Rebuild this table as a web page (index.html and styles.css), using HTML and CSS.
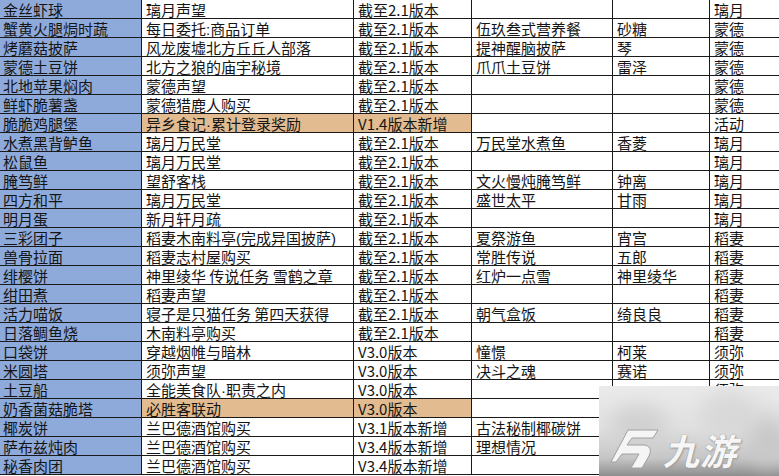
FILE: index.html
```html
<!DOCTYPE html>
<html lang="zh-CN">
<head>
<meta charset="utf-8">
<title>料理表</title>
<link rel="stylesheet" href="styles.css">
</head>
<body>
<div class="sheet">
  <div class="grid">
    <div class="c k">金丝虾球</div><div class="c">璃月声望</div><div class="c">截至2.1版本</div><div class="c"></div><div class="c"></div><div class="c">璃月</div>
    <div class="c k">蟹黄火腿焗时蔬</div><div class="c">每日委托<span class="lat">:</span>商品订单</div><div class="c">截至2.1版本</div><div class="c">伍玖叁式营养餐</div><div class="c">砂糖</div><div class="c">蒙德</div>
    <div class="c k">烤蘑菇披萨</div><div class="c">风龙废墟北方丘丘人部落</div><div class="c">截至2.1版本</div><div class="c">提神醒脑披萨</div><div class="c">琴</div><div class="c">蒙德</div>
    <div class="c k">蒙德土豆饼</div><div class="c">北方之狼的庙宇秘境</div><div class="c">截至2.1版本</div><div class="c">爪爪土豆饼</div><div class="c">雷泽</div><div class="c">蒙德</div>
    <div class="c k">北地苹果焖肉</div><div class="c">蒙德声望</div><div class="c">截至2.1版本</div><div class="c"></div><div class="c"></div><div class="c">蒙德</div>
    <div class="c k">鲜虾脆薯盏</div><div class="c">蒙德猎鹿人购买</div><div class="c">截至2.1版本</div><div class="c"></div><div class="c"></div><div class="c">蒙德</div>
    <div class="c k">脆脆鸡腿堡</div><div class="c hl">异乡食记<span class="lat">·</span>累计登录奖励</div><div class="c hl">V1.4版本新增</div><div class="c"></div><div class="c"></div><div class="c">活动</div>
    <div class="c k">水煮黑背鲈鱼</div><div class="c">璃月万民堂</div><div class="c">截至2.1版本</div><div class="c">万民堂水煮鱼</div><div class="c">香菱</div><div class="c">璃月</div>
    <div class="c k">松鼠鱼</div><div class="c">璃月万民堂</div><div class="c">截至2.1版本</div><div class="c"></div><div class="c"></div><div class="c">璃月</div>
    <div class="c k">腌笃鲜</div><div class="c">望舒客栈</div><div class="c">截至2.1版本</div><div class="c">文火慢炖腌笃鲜</div><div class="c">钟离</div><div class="c">璃月</div>
    <div class="c k">四方和平</div><div class="c">璃月万民堂</div><div class="c">截至2.1版本</div><div class="c">盛世太平</div><div class="c">甘雨</div><div class="c">璃月</div>
    <div class="c k">明月蛋</div><div class="c">新月轩月疏</div><div class="c">截至2.1版本</div><div class="c"></div><div class="c"></div><div class="c">璃月</div>
    <div class="c k">三彩团子</div><div class="c">稻妻木南料亭<span class="lat">(</span>完成异国披萨<span class="lat">)</span></div><div class="c">截至2.1版本</div><div class="c">夏祭游鱼</div><div class="c">宵宫</div><div class="c">稻妻</div>
    <div class="c k">兽骨拉面</div><div class="c">稻妻志村屋购买</div><div class="c">截至2.1版本</div><div class="c">常胜传说</div><div class="c">五郎</div><div class="c">稻妻</div>
    <div class="c k">绯樱饼</div><div class="c">神里绫华 传说任务 雪鹤之章</div><div class="c">截至2.1版本</div><div class="c">红炉一点雪</div><div class="c">神里绫华</div><div class="c">稻妻</div>
    <div class="c k">绀田煮</div><div class="c">稻妻声望</div><div class="c">截至2.1版本</div><div class="c"></div><div class="c"></div><div class="c">稻妻</div>
    <div class="c k">活力喵饭</div><div class="c">寝子是只猫任务 第四天获得</div><div class="c">截至2.1版本</div><div class="c">朝气盒饭</div><div class="c">绮良良</div><div class="c">稻妻</div>
    <div class="c k">日落鲷鱼烧</div><div class="c">木南料亭购买</div><div class="c">截至2.1版本</div><div class="c"></div><div class="c"></div><div class="c">稻妻</div>
    <div class="c k">口袋饼</div><div class="c">穿越烟帷与暗林</div><div class="c">V3.0版本</div><div class="c">憧憬</div><div class="c">柯莱</div><div class="c">须弥</div>
    <div class="c k">米圆塔</div><div class="c">须弥声望</div><div class="c">V3.0版本</div><div class="c">决斗之魂</div><div class="c">赛诺</div><div class="c">须弥</div>
    <div class="c k">土豆船</div><div class="c">全能美食队<span class="lat">·</span>职责之内</div><div class="c">V3.0版本</div><div class="c"></div><div class="c"></div><div class="c">须弥</div>
    <div class="c k">奶香菌菇脆塔</div><div class="c hl">必胜客联动</div><div class="c hl">V3.0版本</div><div class="c"></div><div class="c"></div><div class="c">须弥</div>
    <div class="c k">椰炭饼</div><div class="c">兰巴德酒馆购买</div><div class="c">V3.1版本新增</div><div class="c">古法秘制椰碳饼</div><div class="c"></div><div class="c">须弥</div>
    <div class="c k">萨布兹炖肉</div><div class="c">兰巴德酒馆购买</div><div class="c">V3.4版本新增</div><div class="c">理想情况</div><div class="c"></div><div class="c">须弥</div>
    <div class="c k">秘香肉团</div><div class="c">兰巴德酒馆购买</div><div class="c">V3.4版本新增</div><div class="c"></div><div class="c"></div><div class="c">须弥</div>
  </div>
  <div class="mark">
    <div class="blob b1"></div>
    <div class="blob b2"></div>
    <div class="blob b3"></div>
    <div class="logo">
      <svg class="swirl" width="50" height="42" viewBox="0 0 50 42">
        <path d="M17 2 L47 2 L42 10 L21 10 L16 17 L32 17 C39 17 41 22 38 28 L31 40 L20 40 L28 26 L11 26 L5 34 L0 34 Z" fill="#f5f5f5" stroke="#a0a0a0" stroke-width="1"/>
      </svg>
      <span class="brand">九游</span>
    </div>
  </div>
</div>
</body>
</html>
```

FILE: styles.css
```css
html, body {
  margin: 0;
  padding: 0;
  background: #ffffff;
}

.sheet {
  position: relative;
  width: 779px;
  height: 476px;
  overflow: hidden;
  background: #ffffff;
}

.grid {
  display: grid;
  grid-template-columns: 142px 212px 118px 141px 97px 100px;
  grid-auto-rows: 19px;
  font-family: "Noto Sans CJK SC", "Noto Sans", sans-serif;
  font-size: 15px;
  color: #151515;
}

.c {
  box-sizing: border-box;
  border-right: 1px solid #1a1a1a;
  border-bottom: 1px solid #1a1a1a;
  padding: 1px 0 0 4px;
  line-height: 17px;
  white-space: nowrap;
}

.lat {
  font-family: "Liberation Sans", sans-serif;
}

.k {
  background: #8eaadb;
  padding-left: 3px;
}

.hl {
  background: #e3bb90;
}

.mark {
  position: absolute;
  left: 599px;
  top: 386px;
  width: 180px;
  height: 90px;
  overflow: hidden;
  background: linear-gradient(180deg, #ebebeb 0%, #e2e2e2 45%, #c6c6c6 80%, #8e8e8e 100%);
}

.blob {
  position: absolute;
  border-radius: 50%;
  filter: blur(10px);
}

.b1 {
  left: 10px;
  top: 20px;
  width: 60px;
  height: 40px;
  background: #d0d0d0;
}

.b2 {
  left: 100px;
  top: 5px;
  width: 60px;
  height: 50px;
  background: #d8d8d8;
}

.b3 {
  left: 150px;
  top: 30px;
  width: 40px;
  height: 50px;
  background: #c8c8c8;
}

.logo {
  position: absolute;
  left: 12px;
  top: 42px;
  display: flex;
  align-items: center;
  gap: 6px;
}

.swirl {
  display: block;
}

.brand {
  font-family: "Noto Sans CJK SC", sans-serif;
  font-weight: 700;
  font-size: 36px;
  line-height: 40px;
  color: #f6f6f6;
  transform: skewX(-14deg);
  text-shadow: 0 0 1px #8a8a8a, 1px 1px 2px #9a9a9a;
  letter-spacing: 1px;
}
```
